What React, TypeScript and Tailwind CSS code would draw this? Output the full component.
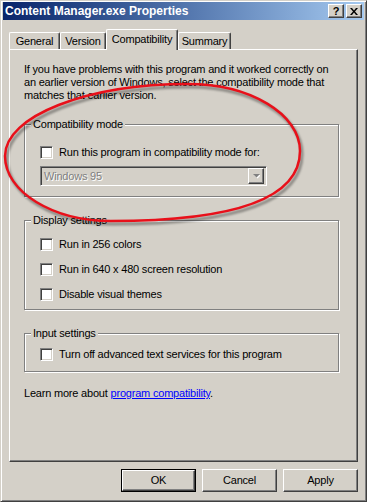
import React from 'react';

const raised =
  'border border-t-white border-l-white border-r-[#404040] border-b-[#404040] shadow-[inset_-1px_-1px_0_#808080]';
const sunken =
  'border border-t-[#808080] border-l-[#808080] border-r-white border-b-white shadow-[inset_1px_1px_0_#404040,inset_-1px_-1px_0_#d4d0c8]';

const Checkbox = ({ label }: { label: string }) => (
  <div className="flex items-center h-[13px]">
    <div className={`w-[13px] h-[13px] bg-white ${sunken}`} />
    <span className="ml-[6px] leading-[13px]">{label}</span>
  </div>
);

const GroupBox = ({ title, className, children }: { title: string; className: string; children: React.ReactNode }) => (
  <div
    className={`relative w-[315px] border border-[#808080] shadow-[1px_1px_0_#fff,inset_1px_1px_0_#fff] ${className}`}
  >
    <span className="absolute left-[6px] -top-[7px] px-[2px] bg-[#d4d0c8] leading-[13px]">{title}</span>
    {children}
  </div>
);

const Tab = ({ label, width, active }: { label: string; width: string; active?: boolean }) =>
  active ? (
    <div
      className={`relative z-10 -mb-[1px] h-[21px] ${width} bg-[#d4d0c8] rounded-t-[2px] border border-b-0 border-t-white border-l-white border-r-[#404040] shadow-[inset_-1px_0_0_#808080] flex justify-center pt-[3px]`}
    >
      <span className="leading-[13px]">{label}</span>
    </div>
  ) : (
    <div
      className={`h-[17px] ${width} rounded-t-[2px] border border-b-0 border-t-white border-l-white border-r-[#404040] shadow-[inset_-1px_0_0_#808080] flex justify-center pt-[2px]`}
    >
      <span className="leading-[13px]">{label}</span>
    </div>
  );

const DialogButton = ({ label, isDefault }: { label: string; isDefault?: boolean }) =>
  isDefault ? (
    <div className="w-[75px] h-[23px] border border-black">
      <div className={`w-full h-full ${raised} flex items-center justify-center`}>{label}</div>
    </div>
  ) : (
    <div className={`w-[75px] h-[23px] ${raised} flex items-center justify-center`}>{label}</div>
  );

const App = () => {
  return (
    <div className="relative w-[367px] h-[502px] overflow-hidden bg-[#d4d0c8] font-['Liberation_Sans',Arial,sans-serif] text-[11px] tracking-[-0.2px] text-black border border-t-[#d4d0c8] border-l-[#d4d0c8] border-r-[#404040] border-b-[#404040] shadow-[inset_1px_1px_0_#fff,inset_-1px_-1px_0_#808080] pt-[1px] px-[2px]">
      {/* Title bar */}
      <div className="h-[18px] flex items-center bg-gradient-to-r from-[#0a246a] to-[#a6caf0] pl-[2px] pr-[2px]">
        <span className="text-white font-bold text-[12px] tracking-normal leading-[18px] flex-1">Content Manager.exe Properties</span>
        <div className={`w-[16px] h-[14px] bg-[#d4d0c8] ${raised} flex items-center justify-center font-bold text-[11px] leading-none`}>?</div>
        <div className={`ml-[2px] w-[16px] h-[14px] bg-[#d4d0c8] ${raised} flex items-center justify-center`}>
          <svg width="8" height="7" viewBox="0 0 8 7">
            <path d="M0 0h2l2 2.5L6 0h2L5 3.5 8 7H6L4 4.5 2 7H0l3-3.5z" fill="#000" />
          </svg>
        </div>
      </div>

      {/* Tabs */}
      <div className="mt-[8px] ml-[6px] flex items-end h-[21px]">
        <Tab label="General" width="w-[51px]" />
        <Tab label="Version" width="w-[46px]" />
        <Tab label="Compatibility" width="w-[72px]" active />
        <Tab label="Summary" width="w-[53px]" />
      </div>

      {/* Panel */}
      <div className={`ml-[6px] w-[349px] h-[413px] ${raised} pl-[14px] pt-[13px]`}>
        <p className="leading-[13px]">
          If you have problems with this program and it worked correctly on
          <br />
          an earlier version of Windows, select the compatibility mode that
          <br />
          matches that earlier version.
        </p>

        <GroupBox title="Compatibility mode" className="mt-[22px] h-[73px] pl-[15px] pt-[21px]">
          <Checkbox label="Run this program in compatibility mode for:" />
          <div className={`mt-[7px] w-[227px] h-[20px] bg-[#d4d0c8] ${sunken} flex items-center`}>
            <span className="flex-1 pl-[3px] text-[#808080] [text-shadow:1px_1px_0_#fff] leading-[13px]">Windows 95</span>
            <div className={`mr-[2px] w-[16px] h-[16px] ${raised} flex items-center justify-center`}>
              <svg width="7" height="5" viewBox="0 0 7 5">
                <path d="M1 1h7L4.5 4.5z" fill="#fff" />
                <path d="M0 0h7L3.5 3.5z" fill="#808080" />
              </svg>
            </div>
          </div>
        </GroupBox>

        <GroupBox title="Display settings" className="mt-[23px] h-[90px] pl-[15px] pt-[17px] flex flex-col gap-[12px]">
          <Checkbox label="Run in 256 colors" />
          <Checkbox label="Run in 640 x 480 screen resolution" />
          <Checkbox label="Disable visual themes" />
        </GroupBox>

        <GroupBox title="Input settings" className="mt-[23px] h-[39px] pl-[15px] pt-[14px]">
          <Checkbox label="Turn off advanced text services for this program" />
        </GroupBox>

        <p className="mt-[15px] leading-[13px]">
          Learn more about <span className="text-[#0000ff] underline">program compatibility</span>.
        </p>
      </div>

      {/* Buttons */}
      <div className="mt-[7px] w-[358px] flex justify-end gap-[6px] pr-[3px]">
        <DialogButton label="OK" isDefault />
        <DialogButton label="Cancel" />
        <DialogButton label="Apply" />
      </div>

      {/* Red annotation ring */}
      <svg className="pointer-events-none absolute left-0 top-0" width="367" height="502" viewBox="0 0 367 502">
        <defs>
          <filter id="soft" x="-10%" y="-10%" width="120%" height="120%">
            <feGaussianBlur stdDeviation="1.2" />
          </filter>
        </defs>
        <path
          d="M4 155C4 115 86 83 187 83C249 83 299 113 299 150C299 195 240 220 110 220C52 220 4 191 4 155Z"
          fill="none"
          stroke="#000"
          strokeOpacity="0.35"
          strokeWidth="3"
          filter="url(#soft)"
          transform="translate(2 3)"
        />
        <path
          d="M4 155C4 115 86 83 187 83C249 83 299 113 299 150C299 195 240 220 110 220C52 220 4 191 4 155Z"
          fill="none"
          stroke="#e8101a"
          strokeWidth="2.5"
        />
      </svg>
    </div>
  );
};

export default App;
